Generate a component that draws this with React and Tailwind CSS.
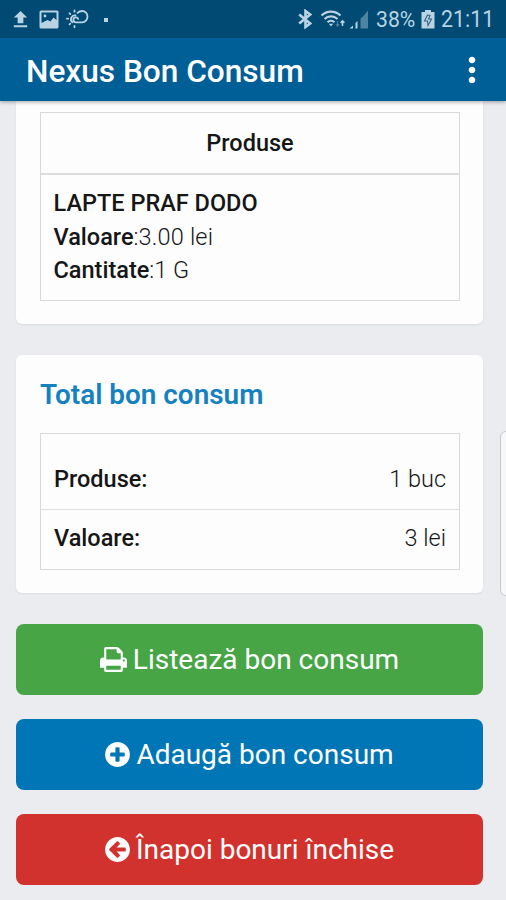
import React from "react";
import { MdFileUpload, MdMoreVert } from "react-icons/md";

const products = [
    { id: 1, name: "LAPTE PRAF DODO", value: "3.00 lei", quantity: "1 G" },
];

const PrintIcon = () => (
    <svg viewBox="64 0 1664 1792" className="w-[27px] h-[29px] mr-[6px]" fill="currentColor">
        <path d="M448 1536h896v-256h-896v256zm0-640h896v-384h-160q-40 0-68-28t-28-68v-160h-640v640zm1152 64q0-26-19-45t-45-19-45 19-19 45 19 45 45 19 45-19 19-45zm128 0v416q0 13-9.5 22.5t-22.5 9.5h-224v160q0 40-28 68t-68 28h-960q-40 0-68-28t-28-68v-160h-224q-13 0-22.5-9.5t-9.5-22.5v-416q0-79 56.5-135.5t135.5-56.5h64v-544q0-40 28-68t68-28h672q40 0 88 20t76 48l152 152q28 28 48 76t20 88v256h64q79 0 135.5 56.5t56.5 135.5z" />
    </svg>
);

const PlusIcon = () => (
    <svg viewBox="128 0 1536 1792" className="w-[25px] h-[29px] mr-[6px]" fill="currentColor">
        <path d="M1344 960v-128q0-26-19-45t-45-19h-256v-256q0-26-19-45t-45-19h-128q-26 0-45 19t-19 45v256h-256q-26 0-45 19t-19 45v128q0 26 19 45t45 19h256v256q0 26 19 45t45 19h128q26 0 45-19t19-45v-256h256q26 0 45-19t19-45zm320-64q0 209-103 385.5t-279.5 279.5-385.5 103-385.5-103-279.5-279.5-103-385.5 103-385.5 279.5-279.5 385.5-103 385.5 103 279.5 279.5 103 385.5z" />
    </svg>
);

const BackIcon = () => (
    <svg viewBox="128 0 1536 1792" className="w-[25px] h-[29px] mr-[6px]" fill="currentColor">
        <path d="M1408 960v-128q0-26-19-45t-45-19h-502l189-189q19-19 19-45t-19-45l-91-91q-18-18-45-18t-45 18l-362 362-91 91q-18 18-18 45t18 45l91 91 362 362q18 18 45 18t45-18l91-91q18-18 18-45t-18-45l-189-189h502q26 0 45-19t19-45zm256-64q0 209-103 385.5t-279.5 279.5-385.5 103-385.5-103-279.5-279.5-103-385.5 103-385.5 279.5-279.5 385.5-103 385.5 103 279.5 279.5 103 385.5z" />
    </svg>
);

const StatusBar = () => (
    <div className="flex items-center justify-between h-[38px] bg-[#004a73] pl-[10px] pr-[13px] text-[#b9d3e2]">
        <div className="flex items-center">
            <MdFileUpload className="w-[23px] h-[23px] -ml-px" />
            <svg viewBox="0 0 20 19" className="w-5 h-[19px] ml-[7px]">
                <rect x="0.5" y="0.5" width="19" height="18" rx="1.5" fill="currentColor" />
                <path d="M2.5 13V2.5h15V10l-3-2.5-3 4-3-1.5z" fill="#004a73" />
                <circle cx="6" cy="6" r="1.4" fill="currentColor" />
            </svg>
            {/* sun behind a cloud */}
            <svg viewBox="0 0 24 20" className="w-6 h-5 ml-[7px]" fill="none" stroke="currentColor" strokeWidth="1.8" strokeLinecap="round">
                <path d="M6.4 13.2A3.800 3.800 0 0 1 9.500 6.500" />
                <path d="M11.500 3.800C13 2.400 14.800 2 16.300 2a5.200 5.700 0 0 1 0 11.400H9.800a2.500 2.500 0 1 1 2.400-3.500" />
                <path d="M8.500 1.500v1.200M3.500 4.300l.8.8M1 9.700h1.200M3.500 15.400l.8-.8M8.500 17v1.300" />
            </svg>
            <span className="w-1 h-1 ml-[14px] mt-px bg-current"></span>
        </div>
        <div className="flex items-center">
            <svg viewBox="0 0 14 20" className="w-[14px] h-5 mr-[8px]" fill="none" stroke="currentColor" strokeWidth="2.6">
                <path d="M1.200 5.500l11 9L7.500 18V2l4.700 3.500-11 9" />
            </svg>
            <svg viewBox="0 0 26 20" className="w-[26px] h-5 mr-[3px]" fill="none" stroke="currentColor" strokeWidth="2.2">
                <path d="M1.500 6.500a13.500 13.500 0 0 1 19 0M4.500 10a9.300 9.300 0 0 1 13 0M7.500 13.200a5 5 0 0 1 7 0" />
                <path d="M8.800 14.800h4.400L11 17.500z" fill="currentColor" stroke="none" />
                <path d="M17.500 12v5M15.800 15l1.700 2.300 1.700-2.300" strokeWidth="1.2" opacity="0.4" />
                <path d="M22.500 17v-5M20.600 13.800l1.900-2 1.900 2" strokeWidth="1.6" />
            </svg>
            <svg viewBox="0 0 20 19" className="w-5 h-[19px] mr-[7px]" fill="currentColor">
                <path d="M0.500 18.500l3.500-3v3zM6.500 13l2-2v7.500h-2z" />
                <path d="M11.500 8.500l3-2.500v12.500h-3zM14.500 6L19 .5v18h-4.500z" opacity="0.42" />
            </svg>
            <span className="text-[22.5px] w-[39px] mt-0.5 whitespace-nowrap origin-left scale-x-94">38%</span>
            <svg viewBox="0 0 14 19" className="w-[14px] h-[19px] ml-[6px] mr-[6px]">
                <path d="M4 0h6v2h3.500v16.500H.5V2H4z" fill="currentColor" />
                <path d="M6.500 5L3.500 11h3L7 15.500 10.500 9H7.600L9 5.500z" fill="none" stroke="#2c6588" strokeWidth="1.1" />
            </svg>
            <span className="text-[23px] w-[52px] mt-0.5 whitespace-nowrap origin-left scale-x-93">21:11</span>
        </div>
    </div>
);

const App = () => {
    return (
        <div className="relative flex flex-col h-[900px] overflow-hidden bg-[#ebecf0] text-[#161616] font-['Roboto',sans-serif]">
            <header className="relative z-10 shadow-[0_1px_4px_rgba(0,0,0,0.35)]">
                <StatusBar />
                <div className="flex items-center justify-between h-[63px] bg-[#005f96] pl-[26px] pr-[17px] text-white">
                    <h1 className="text-[31.6px] font-medium mt-[5px] whitespace-nowrap">Nexus Bon Consum</h1>
                    <MdMoreVert className="w-10 h-10 -mr-[3px]" />
                </div>
            </header>

            <main className="flex flex-col pl-4 pr-[23px] text-[23.5px]">
                <section className="h-[223px] pl-6 pr-[23px] pt-[11px] bg-[#fdfdfe] rounded-b-md shadow-[0_1px_2px_rgba(0,0,0,0.08)]">
                    <div className="border border-[#d9d9db] h-[189px]">
                        <div className="flex items-center justify-center h-[62px] border-b-2 border-[#dcdcde] pt-px font-medium">Produse</div>
                        {products.map((item) => (
                            <div key={item.id} className="px-[12.5px] pt-[12px] leading-[33.5px]">
                                <p className="font-medium">{item.name}</p>
                                <p className="font-light"><span className="font-medium">Valoare</span>:<span className="tracking-[0.2px]">{item.value}</span></p>
                                <p className="font-light"><span className="font-medium">Cantitate</span>:{item.quantity}</p>
                            </div>
                        ))}
                    </div>
                </section>

                <section className="h-[238px] mt-[31px] pl-6 pr-[23px] pt-[20px] bg-[#fdfdfe] rounded-md shadow-[0_1px_2px_rgba(0,0,0,0.08)]">
                    <h2 className="text-[27.9px] leading-[39px] font-semibold text-[#1581bf]">Total bon consum</h2>
                    <div className="mt-[19px] border border-[#d9d9db] h-[137px]">
                        <div className="flex items-end justify-between h-[76px] px-[13px] pb-[13px] border-b border-[#dedee0] leading-[33px]">
                            <span className="font-medium">Produse:</span>
                            <span className="font-light">1 buc</span>
                        </div>
                        <div className="flex items-center justify-between h-[58px] px-[13px]">
                            <span className="font-medium">Valoare:</span>
                            <span className="font-light">3 lei</span>
                        </div>
                    </div>
                </section>

                <div className="flex flex-col gap-6 mt-[31px] text-[28px] text-white">
                    <button className="flex items-center justify-center h-[71px] rounded-lg bg-[#47a546]">
                        <PrintIcon />
                        Listează bon consum
                    </button>
                    <button className="flex items-center justify-center h-[71px] rounded-lg bg-[#0076b6]">
                        <PlusIcon />
                        Adaugă bon consum
                    </button>
                    <button className="flex items-center justify-center h-[71px] rounded-lg bg-[#d2322d]">
                        <BackIcon />
                        Înapoi bonuri închise
                    </button>
                </div>
            </main>

            {/* edge panel handle */}
            <div className="absolute left-[500px] top-[431px] w-3 h-[165px] rounded-md border border-[#c9cacd] bg-[#f6f7f9]"></div>
        </div>
    );
};

export default App;
